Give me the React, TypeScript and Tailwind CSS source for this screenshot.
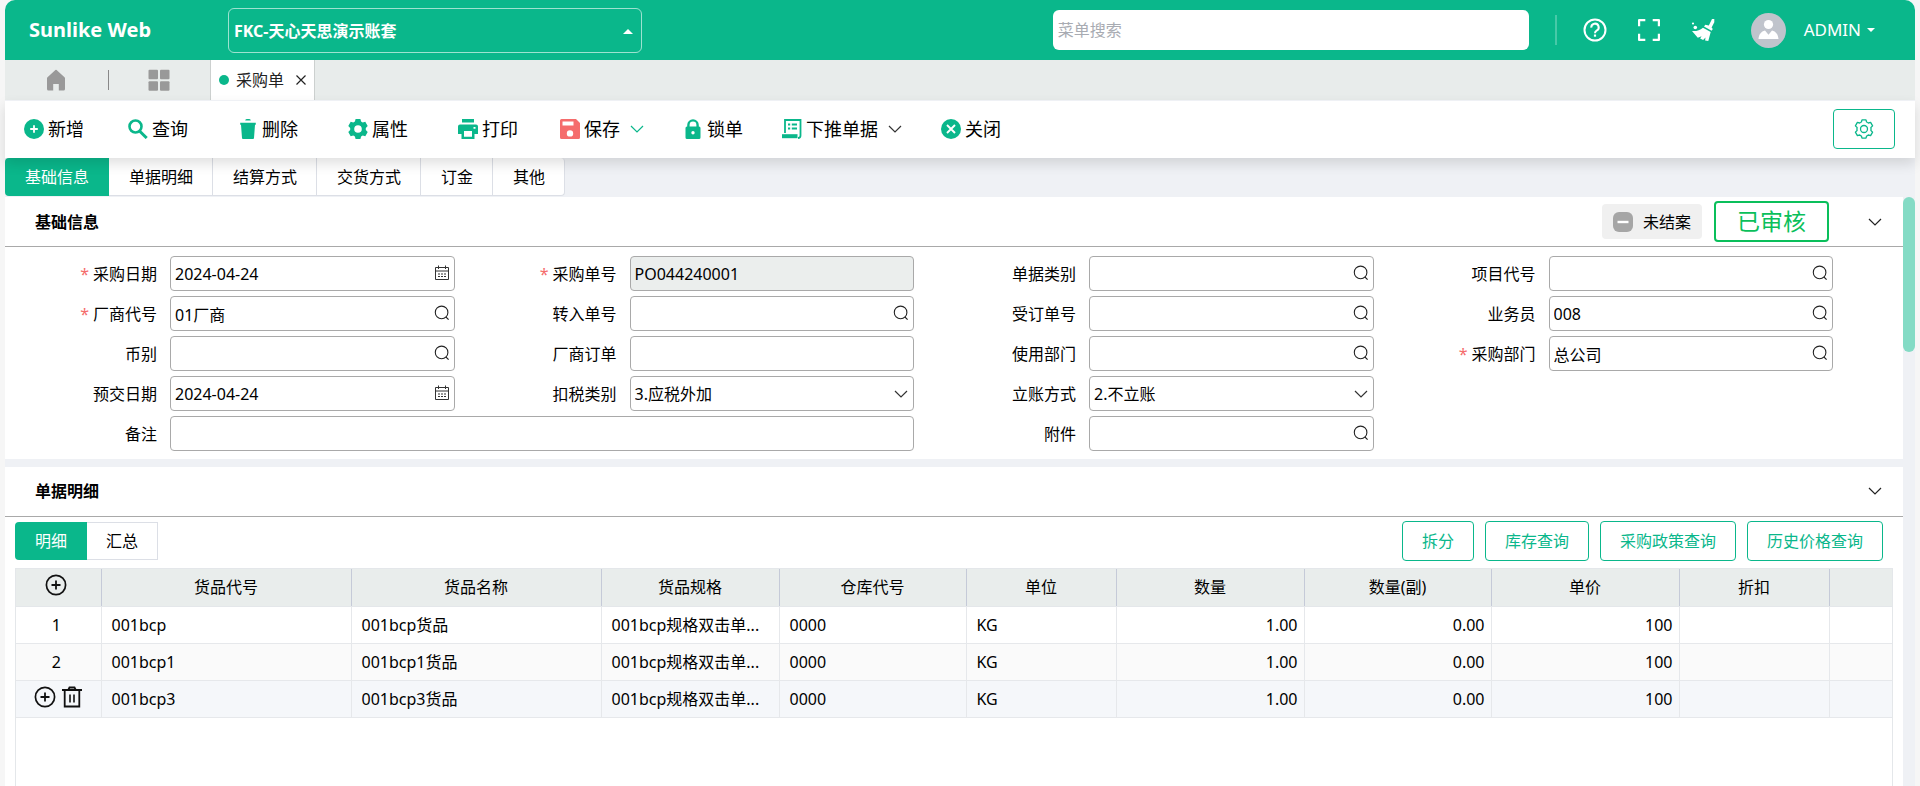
import React from 'react';

const GREEN = '#0ab78b';

interface IconProps {
  className?: string;
}

const ChevronIcon: React.FC<IconProps> = ({ className }) => (
  <svg viewBox="0 0 14 8" className={className} fill="none" stroke="currentColor" strokeWidth="1.2" aria-hidden="true">
    <path d="M1 1l6 6 6-6" />
  </svg>
);

const SearchIcon: React.FC<IconProps> = ({ className }) => (
  <svg viewBox="0 0 16 16" className={className} fill="none" stroke="currentColor" strokeWidth="1.1" aria-hidden="true">
    <circle cx="7.6" cy="7.4" r="6.3" />
    <path d="M11.9 12l2.7 2.7" />
  </svg>
);

const CalendarIcon: React.FC<IconProps> = ({ className }) => (
  <svg viewBox="0 0 16 16" className={className} fill="none" stroke="currentColor" strokeWidth="1" aria-hidden="true">
    <path d="M1.5 2.5h13v12h-13zM1.500 6h13M4.5.5v3.500M11.5.5v3.500" />
    <path d="M4 9h2M7 9h2M10 9h2M4 11.500h2M7 11.500h2M10 11.500h2" />
  </svg>
);

const PlusCircleOutline: React.FC = () => (
  <svg viewBox="0 0 22 22" className="h-[22px] w-[22px]" fill="none" stroke="#111" aria-hidden="true">
    <circle cx="11" cy="11" r="9.6" strokeWidth="1.7" />
    <path d="M11 6.5v9M6.5 11h9" strokeWidth="1.8" />
  </svg>
);

const TrashOutline: React.FC = () => (
  <svg viewBox="0 0 22 22" className="h-[22px] w-[22px]" fill="none" stroke="#111" aria-hidden="true">
    <path d="M1 4h20" strokeWidth="2" />
    <path d="M7.5 3.5l1-2h5l1 2" strokeWidth="1.8" />
    <path d="M3.7 4.5v16h14.6v-16" strokeWidth="1.8" />
    <path d="M9 8.500v8M13 8.500v8" strokeWidth="1.6" />
  </svg>
);

const toolIcons: Record<string, React.ReactNode> = {
  add: (
    <>
      <circle cx="10" cy="10" r="10" fill={GREEN} />
      <path d="M10 6.200v7.600M6.200 10h7.600" stroke="#fff" strokeWidth="1.8" />
    </>
  ),
  query: (
    <>
      <circle cx="7.500" cy="7.500" r="6" fill="none" stroke={GREEN} strokeWidth="2.600" />
      <path d="M11.500 12l7.200 7" stroke={GREEN} strokeWidth="3" />
    </>
  ),
  remove: (
    <path d="M7.200 1.500a1.500 1.500 0 0 1 1.500-1.500h2.600a1.500 1.500 0 0 1 1.500 1.500zM2.200 3.800h15.600v2H17l-1 13.200a1 1 0 0 1-1 1H5a1 1 0 0 1-1-1L3 5.800h-.8z" fill={GREEN} />
  ),
  props: (
    <path
      fillRule="evenodd"
      fill={GREEN}
      d="M7.600 0h4.800l.7 2.600 1.600.9 2.600-.7 2.400 4.100L17.800 9v2l1.900 2.100-2.400 4.100-2.600-.7-1.600.9-.7 2.600H7.600l-.7-2.600-1.600-.9-2.600.7-2.400-4.100L2.200 11V9L.3 6.900l2.400-4.100 2.600.7 1.600-.9zM10 6.200a3.800 3.800 0 1 0 0 7.600 3.800 3.800 0 0 0 0-7.600z"
    />
  ),
  print: (
    <path
      fillRule="evenodd"
      fill={GREEN}
      d="M4 0h12v3.500H4zM2 5.500h16a2 2 0 0 1 2 2V15h-3.500v5h-13v-5H0V7.500a2 2 0 0 1 2-2zM6 12v5.800h8V12zM15.500 8v1.800h2V8z"
    />
  ),
  save: (
    <path
      fillRule="evenodd"
      fill="#f56c6c"
      d="M1.500 0H16l4 4v14.500a1.500 1.500 0 0 1-1.500 1.500h-17A1.500 1.500 0 0 1 0 18.500v-17A1.500 1.500 0 0 1 1.500 0zM2.500 2.600v4h11v-4zM10 11.200a3.200 3.200 0 1 0 0 6.400 3.200 3.200 0 0 0 0-6.400z"
    />
  ),
  lock: (
    <path
      fillRule="evenodd"
      fill={GREEN}
      d="M4.200 7.500V6a5.800 5.800 0 0 1 11.600 0v1.500H16a1.500 1.500 0 0 1 1.500 1.500v9.500A1.500 1.500 0 0 1 16 20H4a1.500 1.500 0 0 1-1.500-1.500V9A1.500 1.500 0 0 1 4 7.500zM6.600 7.500h6.800V6a3.400 3.400 0 0 0-6.800 0zM10 12a1.700 1.700 0 1 0 0 3.400A1.700 1.700 0 0 0 10 12z"
    />
  ),
  push: (
    <g fill="none" stroke={GREEN}>
      <path d="M3 14V1h15.500v15.500a2.500 2.500 0 0 1-2.500 2.500" strokeWidth="1.800" />
      <path d="M0 17.200h15.500" strokeWidth="4" />
      <path d="M6 5.500h2.200M9.800 5.500h5.200M6 9.500h2.200M9.800 9.500h5.200" strokeWidth="2" />
    </g>
  ),
  close: (
    <>
      <circle cx="10" cy="10" r="10" fill={GREEN} />
      <path d="M6 6l8 8M14 6l-8 8" stroke="#fff" strokeWidth="1.900" />
    </>
  ),
};

interface ToolButtonProps {
  icon: string;
  label: string;
  chevron?: string;
}

const ToolButton: React.FC<ToolButtonProps> = ({ icon, label, chevron }) => (
  <button type="button" className="flex items-center gap-1 text-lg whitespace-nowrap">
    <svg viewBox="0 0 20 20" className="h-5 w-5" aria-hidden="true">{toolIcons[icon]}</svg>
    {label}
    {chevron && <ChevronIcon className={`ml-1.5 h-2 w-[14px] ${chevron}`} />}
  </button>
);

interface FieldProps {
  id: string;
  label: string;
  value?: string;
  required?: boolean;
  kind?: 'text' | 'search' | 'date' | 'select' | 'readonly';
  wide?: boolean;
}

const boxClass = 'h-[35px] w-full rounded border border-[#a9a9a9] pl-1 pr-8 outline-none';

const Field: React.FC<FieldProps> = ({ id, label, value = '', required, kind = 'text', wide }) => (
  <div className={`flex items-center ${wide ? 'col-span-2' : ''}`}>
    <label htmlFor={id} className="w-[151px] shrink-0 pr-[13px] text-right">
      {required && <span className="mr-1 text-[#f56c6c]">*</span>}
      {label}
    </label>
    <div className="relative min-w-0 flex-1">
      {kind === 'select' ? (
        <select id={id} defaultValue={value} className={`${boxClass} appearance-none bg-white`}>
          <option>{value}</option>
        </select>
      ) : (
        <input
          id={id}
          type="text"
          defaultValue={value}
          readOnly={kind === 'readonly'}
          className={`${boxClass} ${kind === 'readonly' ? 'bg-[#ebeeed]' : 'bg-white'}`}
        />
      )}
      {kind === 'search' && <SearchIcon className="absolute top-[9px] right-[5px] h-4 w-4 text-[#222]" />}
      {kind === 'date' && <CalendarIcon className="absolute top-[9px] right-[5px] h-4 w-4 text-[#333]" />}
      {kind === 'select' && <ChevronIcon className="absolute top-[14px] right-1.5 h-2 w-[14px] text-[#333]" />}
    </div>
  </div>
);

const fields: (FieldProps | null)[] = [
  { id: 'date', label: '采购日期', value: '2024-04-24', required: true, kind: 'date' },
  { id: 'orderNo', label: '采购单号', value: 'PO044240001', required: true, kind: 'readonly' },
  { id: 'billType', label: '单据类别', kind: 'search' },
  { id: 'project', label: '项目代号', kind: 'search' },
  { id: 'vendor', label: '厂商代号', value: '01厂商', required: true, kind: 'search' },
  { id: 'transferNo', label: '转入单号', kind: 'search' },
  { id: 'salesNo', label: '受订单号', kind: 'search' },
  { id: 'staff', label: '业务员', value: '008', kind: 'search' },
  { id: 'currency', label: '币别', kind: 'search' },
  { id: 'vendorOrder', label: '厂商订单' },
  { id: 'useDept', label: '使用部门', kind: 'search' },
  { id: 'buyDept', label: '采购部门', value: '总公司', required: true, kind: 'search' },
  { id: 'dueDate', label: '预交日期', value: '2024-04-24', kind: 'date' },
  { id: 'taxType', label: '扣税类别', value: '3.应税外加', kind: 'select' },
  { id: 'account', label: '立账方式', value: '2.不立账', kind: 'select' },
  null,
  { id: 'remark', label: '备注', wide: true },
  { id: 'attachment', label: '附件', kind: 'search' },
];

const sections = ['基础信息', '单据明细', '结算方式', '交货方式', '订金', '其他'];

const columns = [
  { title: '货品代号', width: 'w-[250px]' },
  { title: '货品名称', width: 'w-[250px]' },
  { title: '货品规格', width: 'w-[178px]' },
  { title: '仓库代号', width: 'w-[187px]' },
  { title: '单位', width: 'w-[150px]' },
  { title: '数量', width: 'w-[188px]', numeric: true },
  { title: '数量(副)', width: 'w-[187px]', numeric: true },
  { title: '单价', width: 'w-[188px]', numeric: true },
  { title: '折扣', width: 'w-[150px]' },
  { title: '', width: '' },
];

const rows = [
  { bg: 'bg-white', cells: ['001bcp', '001bcp货品', '001bcp规格双击单...', '0000', 'KG', '1.00', '0.00', '100', '', ''] },
  { bg: 'bg-[#fafafa]', cells: ['001bcp1', '001bcp1货品', '001bcp规格双击单...', '0000', 'KG', '1.00', '0.00', '100', '', ''] },
  { bg: 'bg-[#f5f7fa]', cells: ['001bcp3', '001bcp3货品', '001bcp规格双击单...', '0000', 'KG', '1.00', '0.00', '100', '', ''] },
];

const Header: React.FC = () => (
  <header className="flex h-[60px] shrink-0 items-center rounded-t-[10px] bg-[#0ab78b] text-white">
    <h1 className="w-[223px] shrink-0 pl-6 text-xl font-bold">Sunlike Web</h1>
    <button
      type="button"
      className="flex h-[45px] w-[414px] items-center justify-between rounded-md border border-white/60 pt-0.5 pr-2 pl-[5px] font-bold"
    >
      FKC-天心天思演示账套
      <svg viewBox="0 0 10 5" className="h-[5px] w-[10px]" fill="currentColor" aria-hidden="true">
        <path d="M0 5l5-5 5 5z" />
      </svg>
    </button>
    <input
      type="text"
      aria-label="菜单搜索"
      placeholder="菜单搜索"
      className="ml-auto h-10 w-[476px] rounded-md bg-white px-[5px] text-black outline-none placeholder:text-[#a8abb2]"
    />
    <div className="ml-[26px] h-[30px] w-0.5 bg-white/25" />
    <button type="button" aria-label="帮助" className="ml-[26px]">
      <svg viewBox="0 0 24 24" className="h-6 w-6" fill="none" stroke="currentColor" aria-hidden="true">
        <circle cx="12" cy="12" r="10.500" strokeWidth="2" />
        <path d="M8.300 9.700a3.700 3.700 0 1 1 5.300 3c-1.100.6-1.600 1.200-1.600 2.500" strokeWidth="2" />
        <path d="M12 16.500v2.200" strokeWidth="2.200" />
      </svg>
    </button>
    <button type="button" aria-label="全屏" className="ml-[30px]">
      <svg viewBox="0 0 24 24" className="h-6 w-6" fill="none" stroke="currentColor" strokeWidth="2.200" strokeLinejoin="round" aria-hidden="true">
        <path d="M2.100 8.300V2.100h6.200M15.700 2.100h6.200v6.200M21.900 15.700v6.200h-6.200M8.300 21.900H2.100v-6.200" />
      </svg>
    </button>
    <button type="button" aria-label="清理" className="ml-[30px]">
      <svg viewBox="0 0 24 24" className="h-6 w-6" fill="currentColor" aria-hidden="true">
        <path d="M21 1h2.300v3.200l-2.700 5.300 1.200 1.500-1.200 1.800-7.600-4.300 1.300-1.700 3.500.7z" />
        <path d="M12 9.700l7.700 4.300-2.400 9-3.200-.4.4-3-2.400 2.400-3-1.400 1.500-2.400-3.800 1.500L1 13c4 .4 7.800-.4 11-3.300z" />
        <circle cx="2" cy="5.500" r="1.100" />
        <circle cx="4.300" cy="9.500" r="1.800" />
      </svg>
    </button>
    <button type="button" className="ml-9 flex items-center">
      <svg viewBox="0 0 35 35" className="h-[35px] w-[35px]" aria-hidden="true">
        <circle cx="17.500" cy="17.500" r="17.500" fill="#c0c4cc" />
        <circle cx="17.500" cy="11.500" r="4.600" fill="#fff" />
        <path d="M7.500 26c.3-4.500 2.600-7.500 6.500-8.500l3.500 4.300 3.500-4.300c3.900 1 6.200 4 6.500 8.500z" fill="#fff" />
      </svg>
      <span className="ml-[18px] text-[17px]">ADMIN</span>
      <svg viewBox="0 0 8 4" className="mr-10 ml-1.5 h-1 w-2" fill="currentColor" aria-hidden="true">
        <path d="M0 0h8L4 4z" />
      </svg>
    </button>
  </header>
);

const PageTabs: React.FC = () => (
  <nav className="flex h-10 shrink-0 items-center bg-[#e8eceb]">
    <button type="button" aria-label="首页" className="ml-[41px] text-[#999]">
      <svg viewBox="0 0 20 22" className="h-[22px] w-5" fill="currentColor" aria-hidden="true">
        <path d="M10 .8a1 1 0 0 1 .6.200L18.500 8.200a1.500 1.500 0 0 1 .5 1.100V20a1.500 1.500 0 0 1-1.500 1.500h-4.700V15H7.200v6.500H2.500A1.500 1.500 0 0 1 1 20V9.300a1.500 1.500 0 0 1 .5-1.100L9.400 1a1 1 0 0 1 .6-.2z" />
      </svg>
    </button>
    <div className="ml-[42px] h-5 w-px bg-[#888]" />
    <button type="button" aria-label="应用" className="ml-[39px] text-[#999]">
      <svg viewBox="0 0 22 22" className="h-[22px] w-[22px]" fill="currentColor" aria-hidden="true">
        <rect x=".5" y=".8" width="9.500" height="9.500" rx="1" />
        <rect x="12" y=".8" width="9.500" height="9.500" rx="1" />
        <rect x=".5" y="12.200" width="9.500" height="9.500" rx="1" />
        <rect x="12" y="12.200" width="9.500" height="9.500" rx="1" />
      </svg>
    </button>
    <div className="ml-10 flex h-10 items-center border-x border-[#ccd0cf] bg-white px-2">
      <span className="h-2.5 w-2.5 rounded-full bg-[#0ab78b]" />
      <a href="#order" className="ml-[7px] text-[#222]">采购单</a>
      <button type="button" aria-label="关闭标签" className="ml-3">
        <svg viewBox="0 0 10 10" className="h-2.5 w-2.5" stroke="#222" strokeWidth="1.200" aria-hidden="true">
          <path d="M.5.5l9 9M9.500.5l-9 9" />
        </svg>
      </button>
    </div>
  </nav>
);

const Toolbar: React.FC = () => (
  <div className="relative z-10 flex h-[58px] shrink-0 items-center border-t border-[#eff1f5] bg-white pr-5 pb-px pl-[19px] shadow-[0_6px_12px_rgba(0,0,0,0.12)]">
    <div className="w-[104px]"><ToolButton icon="add" label="新增" /></div>
    <div className="w-[110px]"><ToolButton icon="query" label="查询" /></div>
    <div className="w-[110px]"><ToolButton icon="remove" label="删除" /></div>
    <div className="w-[110px]"><ToolButton icon="props" label="属性" /></div>
    <div className="w-[102px]"><ToolButton icon="print" label="打印" /></div>
    <div className="flex gap-[39px]">
      <ToolButton icon="save" label="保存" chevron="text-[#0ab78b]" />
      <ToolButton icon="lock" label="锁单" />
      <ToolButton icon="push" label="下推单据" chevron="text-[#333]" />
      <ToolButton icon="close" label="关闭" />
    </div>
    <button
      type="button"
      aria-label="设置"
      className="ml-auto flex h-10 w-[62px] items-center justify-center rounded border border-[#0ab78b] text-[#0ab78b]"
    >
      <svg viewBox="0 0 20 20" className="h-5 w-5" fill="none" stroke="currentColor" strokeWidth="1.300" strokeLinejoin="round" aria-hidden="true">
        <path d="M8 .8h4l.6 2.200q.9.300 1.700 1l2.300-.6 2 3.500-1.700 1.600q.3 1.500 0 3l1.700 1.600-2 3.500-2.300-.6q-.8.700-1.700 1l-.6 2.200H8L7.400 17q-.9-.3-1.700-1l-2.300.6-2-3.500 1.700-1.600q-.3-1.500 0-3L1.400 6.900l2-3.500 2.300.6q.8-.7 1.700-1z" />
        <circle cx="10" cy="10" r="3.500" />
      </svg>
    </button>
  </div>
);

const DetailTable: React.FC = () => (
  <div className="mx-2.5 mt-[7px] flex-1 border border-b-0 border-[#e4e7ea]">
    <table className="w-full table-fixed border-collapse">
      <thead>
        <tr className="h-[37px] bg-[#e9edec]">
          <th className="w-[85px] border-r border-b border-r-[#c5cad8] border-b-[#e4e7ea] p-0 pr-1 pb-1">
            <button type="button" aria-label="新增行" className="mx-auto block"><PlusCircleOutline /></button>
          </th>
          {columns.map((col, index) => (
            <th
              key={index}
              className={`border-b border-b-[#e4e7ea] p-0 font-normal ${col.width} ${index < columns.length - 1 ? 'border-r border-r-[#c5cad8]' : ''}`}
            >
              {col.title}
            </th>
          ))}
        </tr>
      </thead>
      <tbody>
        {rows.map((row, rowIndex) => (
          <tr key={rowIndex} className={`h-[37px] border-b border-[#e6e8eb] ${row.bg}`}>
            <td className="border-r border-[#e6e8eb] p-0 pr-1 text-center">
              {rowIndex < 2 ? (
                rowIndex + 1
              ) : (
                <span className="flex items-center justify-center gap-[5px] pb-1 pl-1">
                  <button type="button" aria-label="插入行"><PlusCircleOutline /></button>
                  <button type="button" aria-label="删除行"><TrashOutline /></button>
                </span>
              )}
            </td>
            {row.cells.map((cell, index) => (
              <td
                key={index}
                className={`truncate p-0 ${columns[index].numeric ? 'pr-1.5 text-right' : 'pl-2.5'} ${index < row.cells.length - 1 ? 'border-r border-[#e6e8eb]' : ''}`}
              >
                {cell}
              </td>
            ))}
          </tr>
        ))}
      </tbody>
    </table>
  </div>
);

const App: React.FC = () => {
  return (
    <div className="h-screen overflow-hidden bg-[#f6f6f6] px-[5px] font-['Noto_Sans','Noto_Sans_CJK_SC',sans-serif] text-base text-black">
      <div className="flex h-full flex-col">
        <Header />
        <PageTabs />
        <Toolbar />

        {/* Section tabs */}
        <div className="flex h-[39px] shrink-0 bg-[#eff1f5]">
          {sections.map((name, index) => (
            <button
              key={name}
              type="button"
              className={
                index === 0
                  ? 'h-[38px] rounded-l bg-[#0ab78b] px-5 text-white'
                  : 'h-[38px] border-r border-b border-[#dcdfe6] bg-white pr-[19px] pl-5 last:rounded-r'
              }
            >
              {name}
            </button>
          ))}
        </div>

        <div className="flex min-h-0 flex-1 bg-[#eff1f5]">
          <main className="flex min-w-0 flex-1 flex-col gap-2">
            {/* Basic info */}
            <section className="bg-white">
              <div className="flex h-[50px] items-center border-b border-[#a9a9a9] pr-[21px] pl-[30px]">
                <h2 className="mr-auto font-bold">基础信息</h2>
                <span className="flex h-[35px] items-center gap-2.5 rounded bg-[#f0f0f0] px-[11px]">
                  <svg viewBox="0 0 20 20" className="h-5 w-5" aria-hidden="true">
                    <rect width="20" height="20" rx="6" fill="#a6a6a6" />
                    <path d="M4.500 10h11" stroke="#fff" strokeWidth="2.400" />
                  </svg>
                  未结案
                </span>
                <span className="ml-3 flex h-[41px] w-[115px] items-center justify-center rounded border-2 border-[#0abf5b] text-[23px] text-[#0abf5b]">
                  已审核
                </span>
                <button type="button" aria-label="收起基础信息" className="ml-[39px]">
                  <ChevronIcon className="h-2 w-[14px] text-[#222]" />
                </button>
              </div>
              <form className="grid grid-cols-4 gap-x-6 gap-y-[5px] pt-[9px] pr-[70px] pb-2 pl-3.5">
                {fields.map((field, index) => (field ? <Field key={field.id} {...field} /> : <div key={index} />))}
              </form>
            </section>

            {/* Order lines */}
            <section className="flex flex-1 flex-col bg-white">
              <div className="flex h-[50px] shrink-0 items-center border-b border-[#a9a9a9] pr-[21px] pb-px pl-[30px]">
                <h2 className="mr-auto font-bold">单据明细</h2>
                <button type="button" aria-label="收起单据明细">
                  <ChevronIcon className="h-2 w-[14px] text-[#222]" />
                </button>
              </div>
              <div className="mt-1 flex items-center gap-[11px] pr-5 pl-2.5">
                <div className="mr-auto flex h-[38px]">
                  <button type="button" className="rounded-l bg-[#0ab78b] px-5 text-white">明细</button>
                  <button type="button" className="border border-l-0 border-[#dcdfe6] px-[19px]">汇总</button>
                </div>
                {['拆分', '库存查询', '采购政策查询', '历史价格查询'].map((name) => (
                  <button key={name} type="button" className="h-10 rounded border border-[#0ab78b] px-[19px] text-[#0ab78b]">
                    {name}
                  </button>
                ))}
              </div>
              <DetailTable />
            </section>
          </main>
          {/* Scrollbar */}
          <div className="w-3 shrink-0">
            <div className="h-[155px] rounded-full bg-[#84dbc5]" />
          </div>
        </div>
      </div>
    </div>
  );
};

export default App;
